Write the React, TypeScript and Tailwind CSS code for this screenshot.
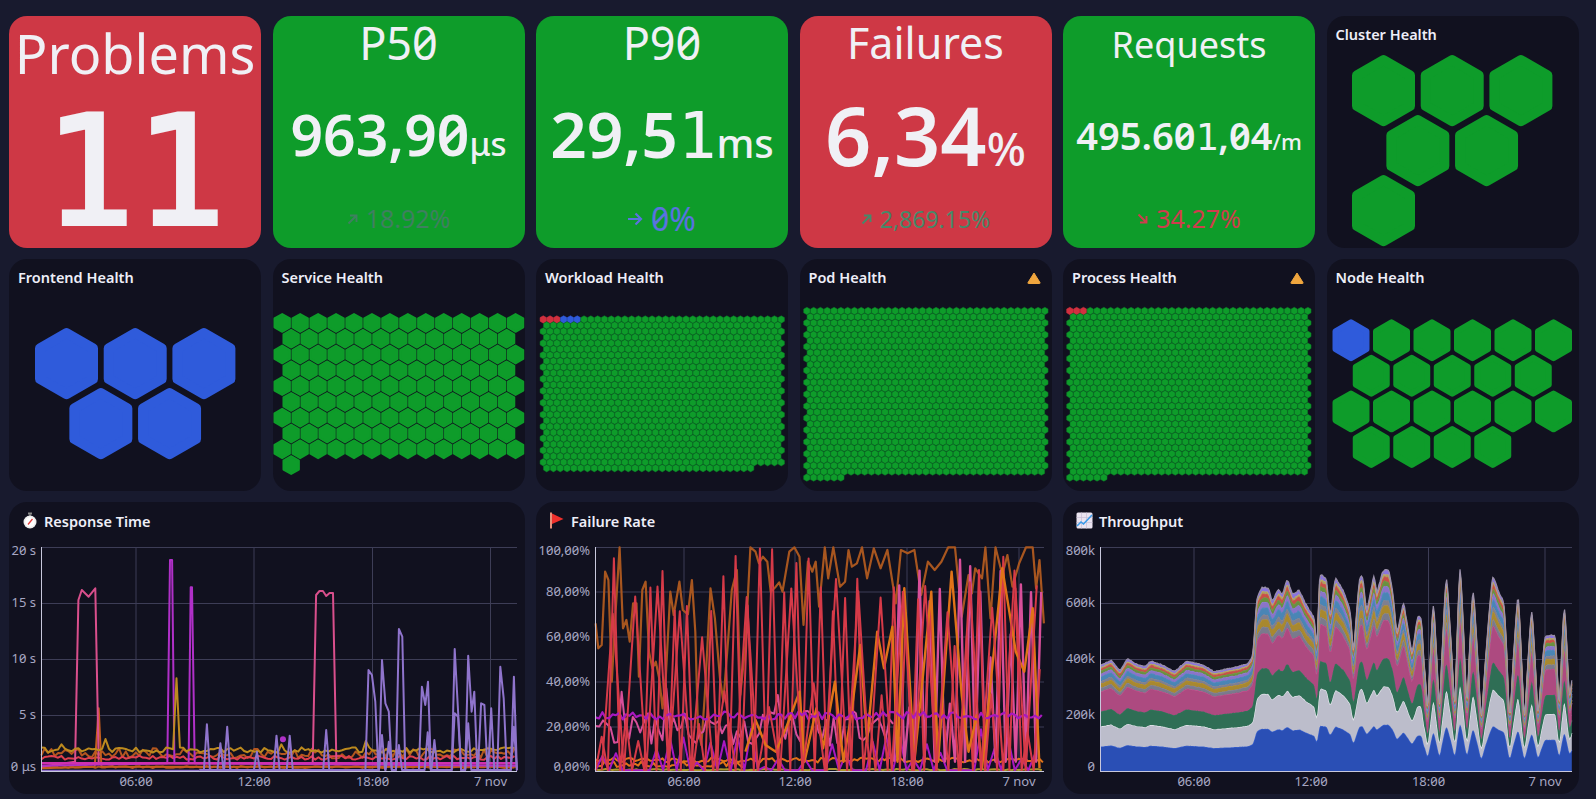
import type { ReactNode } from 'react';

const GREEN = '#0e9c2a';
const BLUE = '#2f5bdb';
const LABEL = '#a6a6c2';

function rng(seed: number) {
    let a = seed;
    return () => {
        a = (a + 0x6d2b79f5) | 0;
        let t = Math.imul(a ^ (a >>> 15), 1 | a);
        t = (t + Math.imul(t ^ (t >>> 7), 61 | t)) ^ t;
        return ((t ^ (t >>> 14)) >>> 0) / 4294967296;
    };
}

type Pt = [number, number];

function noiseLine(from: number, to: number, step: number, base: number, amp: number, seed: number): Pt[] {
    const r = rng(seed);
    const out: Pt[] = [];
    for (let x = from; x <= to; x += step) out.push([x, base + (r() - 0.5) * amp]);
    return out;
}

function spikeLine(from: number, to: number, step: number, floor: number, low: number, high: number, seed: number): Pt[] {
    const r = rng(seed);
    const out: Pt[] = [];
    for (let x = from; x <= to; x += step) {
        out.push([x, floor]);
        const w = r();
        const top = w < 0.55 ? low + r() * 200 : low + r() * (high - low);
        out.push([x + step / 2, top]);
    }
    return out;
}

function peaks(base: number, list: Pt[], from: number, to: number): Pt[] {
    const out: Pt[] = [[from, base]];
    list.forEach(([x, y], i) => {
        const prev = list[i - 1];
        if (!prev || x - prev[0] > 12) out.push([x - 9, base]);
        out.push([x, y]);
        const next = list[i + 1];
        if (!next || next[0] - x > 12) out.push([x + 9, base]);
    });
    out.push([to, base]);
    return out;
}

function Num({ text }: { text: string }) {
    return (
        <>
            {text.split(/(1)/).map((part, i) =>
                part === '1'
                    ? <span key={i} className="font-['DejaVu_Sans_Mono',monospace] font-normal">1</span>
                    : <span key={i}>{part}</span>,
            )}
        </>
    );
}

function Arrow({ dir, color }: { dir: 'up' | 'down' | 'right'; color: string }) {
    if (dir === 'right') {
        return (
            <svg width="15" height="14" viewBox="0 0 15 14" fill="none" stroke={color} strokeWidth="2.2">
                <path d="M0 7h13M7.5 1.5l5.5 5.5-5.5 5.5" />
            </svg>
        );
    }
    const d = dir === 'up' ? 'M1.5 10.5l8-8M3 2.5h6.5V9' : 'M1.5 1.5l8 8M3 9.5h6.5V3';
    return (
        <svg width="11" height="12" viewBox="0 0 11 12" fill="none" stroke={color} strokeWidth="1.9">
            <path d={d} />
        </svg>
    );
}

type StatProps = {
    title: string;
    titleClass: string;
    value: string;
    valueClass: string;
    unit: string;
    unitClass: string;
    bg: string;
    delta: string;
    deltaClass: string;
    deltaColor: string;
    dir: 'up' | 'down' | 'right';
};

function StatCard(p: StatProps) {
    return (
        <div className={`flex flex-col items-center rounded-[18px] text-[#f0f0f5] ${p.bg}`}>
            <div className={`whitespace-nowrap font-normal slashed-zero ${p.titleClass}`}>{p.title}</div>
            <div className="flex flex-1 items-center justify-center whitespace-nowrap">
                <span className={`font-semibold slashed-zero ${p.valueClass}`}>
                    <Num text={p.value} />
                    <span className={`font-medium ${p.unitClass}`}>{p.unit}</span>
                </span>
            </div>
            <div className="mb-[14px] flex h-[30px] items-center gap-[8px]">
                <Arrow dir={p.dir} color={p.deltaColor} />
                <span className={`font-normal slashed-zero ${p.deltaClass}`}>{p.delta}</span>
            </div>
        </div>
    );
}

type CombProps = {
    rows: number[];
    x0: number;
    y0: number;
    w: number;
    dx: number;
    dy: number;
    s: number;
    stroke?: string;
    colorAt?: (n: number) => string;
    fill?: string;
};

function Honeycomb({ rows, x0, y0, w, dx, dy, s, stroke, colorAt, fill = GREEN }: CombProps) {
    const inner = w - s;
    const halfW = inner / 2;
    const r = inner / Math.sqrt(3);
    const hexes: ReactNode[] = [];
    let n = 0;
    rows.forEach((count, j) => {
        for (let i = 0; i < count; i++) {
            const cx = x0 + w / 2 + i * dx + (j % 2 ? dx / 2 : 0);
            const cy = y0 + r + s / 2 + j * dy;
            const points = `${cx},${cy - r} ${cx + halfW},${cy - r / 2} ${cx + halfW},${cy + r / 2} ${cx},${cy + r} ${cx - halfW},${cy + r / 2} ${cx - halfW},${cy - r / 2}`;
            const c = colorAt ? colorAt(n) : fill;
            hexes.push(
                <polygon
                    key={n}
                    points={points}
                    fill={c}
                    stroke={stroke && c === GREEN ? stroke : c}
                    strokeWidth={s}
                    strokeLinejoin="round"
                />,
            );
            n++;
        }
    });
    return <svg className="w-full flex-1">{hexes}</svg>;
}

function Warning() {
    return (
        <svg width="14" height="12" viewBox="0 0 14 12" className="mt-[5px]">
            <path d="M7 1L13 10.6Q13.4 11.5 12.4 11.5H1.6Q0.6 11.5 1 10.6Z" fill="#f0a63e" stroke="#f0a63e" strokeLinejoin="round" />
        </svg>
    );
}

function HealthPanel({ title, warn, children }: { title: string; warn?: boolean; children: ReactNode }) {
    return (
        <div className="flex flex-col rounded-[18px] bg-[#11111f]">
            <div className="flex h-[30px] shrink-0 justify-between pl-[9px] pr-[11px] pt-[8px] text-[14.5px] font-semibold leading-[20px] text-[#eeeef8]">
                <span>{title}</span>
                {warn && <Warning />}
            </div>
            {children}
        </div>
    );
}

function tinyRows(count: number, last: number) {
    const rows: number[] = [];
    for (let j = 0; j < count; j++) rows.push(j % 2 ? 35 : 36);
    rows[count - 1] = last;
    return rows;
}

function Stopwatch() {
    return (
        <svg width="16" height="17" viewBox="0 0 16 17">
            <rect x="6" y="0.5" width="4" height="2" fill="#8a8a8a" />
            <rect x="7.2" y="2" width="1.6" height="2" fill="#777" />
            <circle cx="8" cy="10" r="6.5" fill="#eeeeee" />
            <circle cx="8" cy="10" r="4.8" fill="#ffffff" />
            <path d="M6 12.5L10.5 7" stroke="#e33b3b" strokeWidth="1.3" />
        </svg>
    );
}

function Flag() {
    return (
        <svg width="16" height="17" viewBox="0 0 16 17">
            <rect x="1" y="0.5" width="2" height="16" fill="#e8907a" />
            <path d="M3 1.5L14.5 7L3 12Z" fill="#f0302c" />
        </svg>
    );
}

function ChartEmoji() {
    return (
        <svg width="17" height="17" viewBox="0 0 17 17">
            <rect x="0.5" y="0.5" width="16" height="16" rx="1.5" fill="#ebe4f0" />
            <path d="M0.5 5.5h16M0.5 10.5h16M5.5 0.5v16M10.5 0.5v16" stroke="#c9bfd6" strokeWidth="0.7" />
            <path d="M1 14l4-4 2.5 2L16 3" fill="none" stroke="#3b9be8" strokeWidth="1.6" />
        </svg>
    );
}

type ChartSpec = {
    left: number;
    right: number;
    yLines: { y: number; label: string; labelY: number }[];
    xTicks: { x: number; label: string }[];
    children: ReactNode;
};

function Chart({ left, right, yLines, xTicks, children }: ChartSpec) {
    return (
        <svg className="w-full flex-1 overflow-visible slashed-zero">
            {yLines.slice(1).map(l => <line key={l.y} x1={left} x2={right} y1={l.y} y2={l.y} stroke="#3d3d56" />)}
            <line x1={left} x2={right} y1={0.5} y2={0.5} stroke="#3d3d56" />
            {xTicks.map(t => <line key={t.label} x1={t.x} x2={t.x} y1={0} y2={224.5} stroke="#3d3d56" />)}
            {children}
            <line x1={left + 0.5} x2={left + 0.5} y1={0} y2={225} stroke="#c8c8dc" />
            <line x1={left} x2={right} y1={224.5} y2={224.5} stroke="#c8c8dc" />
            {yLines.map(l => (
                <text key={l.label} x={left - 5} y={l.labelY} textAnchor="end" dominantBaseline="middle" fontSize="13" fill={LABEL}>
                    {l.label}
                </text>
            ))}
            {xTicks.map(t => (
                <text key={t.label} x={t.x} y={236} textAnchor="middle" dominantBaseline="middle" fontSize="13" fill={LABEL}>
                    {t.label}
                </text>
            ))}
        </svg>
    );
}

function Line({ pts, color, tx, width = 2 }: { pts: Pt[]; color: string; tx: (p: Pt) => Pt; width?: number }) {
    const d = pts.map(p => tx(p).map(v => v.toFixed(1)).join(',')).join(' ');
    return <polyline points={d} fill="none" stroke={color} strokeWidth={width} strokeLinejoin="round" />;
}

function ResponseChart() {
    const tx = (p: Pt): Pt => [p[0] / 2.958 - 9, p[1] / 3 - 52];
    const pink: Pt[] = [[122, 815], [222, 800], [232, 315], [242, 285], [262, 305], [282, 280], [292, 805], [925, 805], [935, 300], [945, 288], [955, 288], [965, 303], [975, 294], [985, 294], [995, 805], [1530, 805]];
    const magenta: Pt[] = [[122, 812], [495, 805], [503, 195], [509, 195], [516, 805], [558, 805], [564, 277], [568, 277], [576, 805], [1530, 812]];
    const gold = noiseLine(122, 1530, 10, 765, 16, 7).map(([x, y]): Pt => {
        if (x === 522) return [x, 550];
        if (x === 312) return [x, 732];
        if (x === 182) return [x, 748];
        if (x === 832) return [x, 748];
        if (x === 1082) return [x, 738];
        return [x, y];
    });
    const purple = peaks(825, [
        [612, 688], [652, 745], [672, 695], [760, 770], [818, 722], [857, 722], [965, 705],
        [1090, 525], [1100, 540], [1110, 620], [1130, 495], [1140, 625], [1150, 650], [1180, 402], [1190, 425],
        [1248, 575], [1258, 630], [1266, 560], [1345, 462], [1355, 650], [1385, 482], [1395, 650], [1403, 590],
        [1423, 625], [1433, 630], [1453, 640], [1480, 515], [1490, 610], [1520, 545],
    ], 590, 1530);
    const purple2 = peaks(825, [[1130, 720], [1150, 740], [1180, 750], [1265, 712], [1285, 735], [1345, 655], [1355, 665], [1385, 685], [1520, 695]], 590, 1530);
    return (
        <Chart
            left={32}
            right={508}
            yLines={[
                { y: 0, label: '20 s', labelY: 5 },
                { y: 56.5, label: '15 s', labelY: 57 },
                { y: 112.5, label: '10 s', labelY: 113 },
                { y: 168.5, label: '5 s', labelY: 169 },
                { y: 224.5, label: '0 μs', labelY: 221 },
            ]}
            xTicks={[{ x: 127, label: '06:00' }, { x: 245, label: '12:00' }, { x: 363.5, label: '18:00' }, { x: 481.5, label: '7 nov' }]}
        >
            <Line pts={noiseLine(122, 1530, 10, 775, 30, 3)} color="#b4561f" tx={tx} />
            <Line pts={noiseLine(122, 1530, 10, 788, 12, 4)} color="#e0404e" tx={tx} />
            <Line pts={noiseLine(122, 1530, 10, 816, 6, 5)} color="#b4561f" tx={tx} />
            <Line pts={[[122, 820], [280, 815], [292, 640], [300, 815], [1530, 815]]} color="#c45d1e" tx={tx} />
            <Line pts={pink} color="#d94f8c" tx={tx} />
            <Line pts={magenta} color="#b030c8" tx={tx} />
            <Line pts={[[122, 805], [1530, 805]]} color="#d030b0" tx={tx} width={2.4} />
            <Line pts={gold} color="#bd8a1e" tx={tx} />
            <Line pts={[[122, 827], [590, 827]]} color="#8f74cc" tx={tx} />
            <Line pts={purple2} color="#8f74cc" tx={tx} />
            <Line pts={purple} color="#8f74cc" tx={tx} />
            <circle cx={837 / 2.958 - 9} cy={733 / 3 - 52} r="3" fill="#b030c8" />
        </Chart>
    );
}

function FailureChart() {
    const tx = (p: Pt): Pt => [Math.min(p[0], 1523) / 2.958 - 7, Math.min(Math.max(p[1], 157), 826) / 3 - 52];
    const brown: Pt[] = [[197, 385], [205, 460], [215, 450], [225, 230], [235, 255], [245, 560], [255, 370], [268, 157], [278, 400], [288, 375], [298, 440], [308, 325], [318, 325], [325, 545], [335, 285], [345, 260], [355, 470], [365, 520], [375, 500], [385, 550], [395, 640], [405, 540], [418, 290], [428, 360], [445, 260], [455, 345], [470, 358], [482, 255], [492, 410], [500, 700], [510, 750], [520, 600], [537, 280], [550, 370], [565, 550], [575, 620], [590, 420], [600, 285], [615, 225], [625, 600], [640, 450], [655, 157], [670, 170], [680, 205], [692, 185], [705, 200], [715, 290], [730, 275], [740, 262], [750, 290], [770, 170], [785, 157], [800, 185], [812, 390], [825, 200], [838, 230], [848, 200], [858, 335], [875, 157], [885, 250], [900, 157], [920, 275], [935, 260], [945, 165], [955, 215], [970, 205], [985, 157], [1000, 250], [1020, 160], [1040, 220], [1060, 165], [1085, 325], [1100, 165], [1120, 175], [1140, 165], [1160, 300], [1180, 200], [1200, 225], [1220, 200], [1240, 157], [1260, 157], [1280, 365], [1300, 240], [1310, 295], [1320, 220], [1340, 250], [1350, 157], [1365, 370], [1380, 157], [1400, 240], [1415, 180], [1430, 275], [1450, 205], [1470, 157], [1490, 157], [1500, 280], [1510, 195], [1523, 385]];
    const orange: Pt[] = [[640, 770], [670, 675], [700, 750], [730, 770], [760, 700], [800, 590], [815, 800], [850, 640], [870, 760], [905, 560], [930, 800], [950, 680], [980, 450], [1000, 740], [1030, 410], [1050, 520], [1075, 395], [1090, 800], [1110, 280], [1140, 800], [1190, 290], [1210, 800], [1250, 230], [1280, 600], [1300, 770], [1325, 660], [1340, 820], [1400, 220], [1440, 470], [1465, 530], [1490, 340], [1510, 820]];
    const pinkLow = noiseLine(197, 1080, 11, 700, 110, 21).map(([x, y], i): Pt => {
        if (i === 7) return [x, 590];
        if (i === 19) return [x, 580];
        if (i === 49) return [x, 600];
        return [x, y];
    });
    return (
        <Chart
            left={59}
            right={508}
            yLines={[
                { y: 0, label: '100,00%', labelY: 5 },
                { y: 45, label: '80,00%', labelY: 46 },
                { y: 90, label: '60,00%', labelY: 91 },
                { y: 135, label: '40,00%', labelY: 136 },
                { y: 180, label: '20,00%', labelY: 181 },
                { y: 224.5, label: '0,00%', labelY: 221 },
            ]}
            xTicks={[{ x: 148, label: '06:00' }, { x: 259, label: '12:00' }, { x: 371, label: '18:00' }, { x: 483, label: '7 nov' }]}
        >
            <Line pts={brown} color="#a8561f" tx={tx} width={2.2} />
            <Line pts={noiseLine(197, 640, 9, 808, 18, 31)} color="#e07318" tx={tx} />
            <Line pts={noiseLine(197, 1523, 9, 795, 15, 32)} color="#e07318" tx={tx} />
            <Line pts={noiseLine(197, 1523, 10, 824, 4, 33)} color="#a9962a" tx={tx} />
            <Line pts={spikeLine(197, 1500, 40, 828, 700, 800, 34)} color="#a818c0" tx={tx} />
            <Line pts={pinkLow} color="#d84f9a" tx={tx} />
            <Line pts={spikeLine(1080, 1500, 30, 800, 170, 700, 35)} color="#d84f9a" tx={tx} width={2.4} />
            <Line pts={spikeLine(197, 1500, 36, 828, 157, 760, 36)} color="#d63a48" tx={tx} />
            <Line pts={orange} color="#e07318" tx={tx} width={2.4} />
            <Line pts={noiseLine(197, 1523, 10, 662, 24, 38)} color="#a818c0" tx={tx} width={2.2} />
            <Line pts={spikeLine(215, 1500, 66, 828, 157, 700, 37)} color="#d63a48" tx={tx} />
        </Chart>
    );
}

const ENVELOPE: Pt[] = [[120, 510], [150, 495], [175, 528], [197, 490], [225, 508], [250, 515], [265, 498], [300, 510], [335, 530], [370, 498], [420, 510], [450, 530], [495, 520], [520, 515], [550, 505], [565, 480], [575, 310], [590, 277], [610, 278], [620, 320], [640, 280], [650, 300], [665, 250], [680, 300], [700, 285], [720, 330], [745, 370], [752, 490], [758, 237], [780, 250], [790, 370], [805, 245], [830, 290], [850, 350], [858, 480], [875, 250], [885, 240], [897, 350], [920, 230], [925, 300], [945, 225], [962, 225], [975, 300], [985, 420], [1005, 318], [1030, 480], [1045, 365], [1058, 365], [1070, 640], [1075, 745], [1092, 348], [1110, 730], [1130, 238], [1155, 730], [1170, 188], [1190, 730], [1208, 288], [1232, 760], [1265, 256], [1285, 330], [1300, 370], [1315, 765], [1340, 312], [1358, 765], [1380, 373], [1398, 740], [1418, 488], [1450, 485], [1460, 740], [1475, 345], [1490, 700], [1497, 625]];

const LAYERS: { top: number; fill: string; line: string }[] = [
    { top: 0.23, fill: '#2a4fb5', line: '#3a62d0' },
    { top: 0.42, fill: '#bcbdcb', line: '#e8ebf0' },
    { top: 0.56, fill: '#2f6e55', line: '#2f7a5a' },
    { top: 0.75, fill: '#ad4a80', line: '#c85090' },
    { top: 0.785, fill: '#7a7a8c', line: '#8a8a98' },
    { top: 0.825, fill: '#a8882f', line: '#b89430' },
    { top: 0.85, fill: '#7f7f90', line: '#8a8a98' },
    { top: 0.89, fill: '#4a85b5', line: '#5090c0' },
    { top: 0.92, fill: '#8a74c8', line: '#9480d0' },
    { top: 0.945, fill: '#6a9040', line: '#74a048' },
    { top: 0.965, fill: '#c85048', line: '#d05850' },
    { top: 0.98, fill: '#b0a060', line: '#c0b070' },
    { top: 1, fill: '#8a74e0', line: '#9a90a8' },
];

function envelopeAt(x: number) {
    for (let i = 1; i < ENVELOPE.length; i++) {
        const [x1, y1] = ENVELOPE[i - 1];
        const [x2, y2] = ENVELOPE[i];
        if (x <= x2) {
            const y = y1 + ((x - x1) / (x2 - x1)) * (y2 - y1);
            // the late peaks are round on top and sharp in the dips
            return x > 1065 ? 828 - 640 * Math.pow((828 - y) / 640, 0.72) : y;
        }
    }
    return ENVELOPE[ENVELOPE.length - 1][1];
}

function ThroughputChart() {
    const sx = (x: number) => x / 2.925 - 3;
    const sy = (y: number) => y / 3 - 52;
    const xs: number[] = [];
    for (let x = 120; x <= 1497; x += 3) xs.push(x);
    const env = xs.map(envelopeAt).map((y, i, a) => (y * 2 + (a[i - 1] ?? y) + (a[i + 1] ?? y)) / 4);
    const r = rng(11);
    const tops = LAYERS.map(l => {
        return xs.map((_, i) => {
            const wobble = 1 + (r() - 0.5) * 0.008;
            return 828 - (828 - env[i]) * l.top * wobble;
        });
    });
    const fmt = (x: number, y: number) => `${sx(x).toFixed(1)},${sy(y).toFixed(1)}`;
    return (
        <Chart
            left={37}
            right={509}
            yLines={[
                { y: 0, label: '800k', labelY: 5 },
                { y: 56.5, label: '600k', labelY: 57 },
                { y: 112.5, label: '400k', labelY: 113 },
                { y: 168.5, label: '200k', labelY: 169 },
                { y: 224.5, label: '0', labelY: 221 },
            ]}
            xTicks={[{ x: 131, label: '06:00' }, { x: 248, label: '12:00' }, { x: 365.5, label: '18:00' }, { x: 482, label: '7 nov' }]}
        >
            {LAYERS.map((l, k) => {
                const upper = xs.map((x, i) => fmt(x, tops[k][i]));
                const lower = xs.map((x, i) => fmt(x, k ? tops[k - 1][i] : 828)).reverse();
                return (
                    <g key={k}>
                        <polygon points={[...upper, ...lower].join(' ')} fill={l.fill} />
                        <polyline points={upper.join(' ')} fill="none" stroke={l.line} strokeWidth="1.2" />
                    </g>
                );
            })}
        </Chart>
    );
}

function ChartPanel({ icon, title, children }: { icon: ReactNode; title: string; children: ReactNode }) {
    return (
        <div className="col-span-2 flex flex-col rounded-[18px] bg-[#11111f]">
            <div className="flex h-[45px] shrink-0 items-center gap-[6px] pb-[8px] pl-[13px] text-[14.5px] font-semibold leading-[20px] text-[#eeeef8]">
                {icon}
                <span>{title}</span>
            </div>
            {children}
        </div>
    );
}

export default function App() {
    return (
        <div className="h-[799px] w-[1596px] overflow-hidden bg-[#181a2e] pl-[9px] pt-[16px] font-['Noto_Sans',sans-serif]">
            <div className="grid w-[1569.5px] grid-cols-6 grid-rows-[232px_232px_292px] gap-x-[11.5px] gap-y-[11px]">
                <div className="flex flex-col items-center rounded-[18px] bg-[#ce3845] text-[#f0f0f5]">
                    <div className="pt-[2px] text-[54px] font-normal leading-[70px]">Problems</div>
                    <div className="flex flex-1 items-center pt-[8px] font-['DejaVu_Sans_Mono',monospace] text-[151px] leading-[130px] [-webkit-text-stroke:4px_#f0f0f5]">11</div>
                </div>
                <StatCard
                    title="P50"
                    titleClass="pt-[4px] text-[45px] leading-[46px]"
                    value="963,90"
                    valueClass="text-[57px]"
                    unit="μs"
                    unitClass="text-[33px]"
                    bg="bg-[#0e9c2a]"
                    delta="18.92%"
                    deltaClass="text-[25px] text-[#3f8060]"
                    deltaColor="#3f8060"
                    dir="up"
                />
                <StatCard
                    title="P90"
                    titleClass="pt-[4px] text-[45px] leading-[46px]"
                    value="29,51"
                    valueClass="text-[64px]"
                    unit="ms"
                    unitClass="text-[40px]"
                    bg="bg-[#0e9c2a]"
                    delta="0%"
                    deltaClass="text-[32px] text-[#5a72e0]"
                    deltaColor="#5a72e0"
                    dir="right"
                />
                <StatCard
                    title="Failures"
                    titleClass="pt-[4px] text-[43px] leading-[46px]"
                    value="6,34"
                    valueClass="text-[81px]"
                    unit="%"
                    unitClass="text-[46px]"
                    bg="bg-[#ce3845]"
                    delta="2,869.15%"
                    deltaClass="text-[23px] text-[#46896a]"
                    deltaColor="#46896a"
                    dir="up"
                />
                <StatCard
                    title="Requests"
                    titleClass="pt-[6px] text-[36px] leading-[46px]"
                    value="495.601,04"
                    valueClass="text-[38px]"
                    unit="/m"
                    unitClass="text-[22px]"
                    bg="bg-[#0e9c2a]"
                    delta="34.27%"
                    deltaClass="text-[25px] text-[#cf3d4d]"
                    deltaColor="#cf3d4d"
                    dir="down"
                />
                <HealthPanel title="Cluster Health">
                    <Honeycomb rows={[3, 2, 1]} x0={25} y0={9} w={63} dx={68.7} dy={60} s={10} />
                </HealthPanel>

                <HealthPanel title="Frontend Health">
                    <Honeycomb rows={[3, 2]} x0={26} y0={39} w={63} dx={68.7} dy={60} s={10} fill={BLUE} />
                </HealthPanel>
                <HealthPanel title="Service Health">
                    <Honeycomb rows={[14, 13, 14, 13, 14, 13, 14, 13, 14, 1]} x0={0.5} y0={24} w={17.4} dx={17.95} dy={15.8} s={2} />
                </HealthPanel>
                <HealthPanel title="Workload Health">
                    <Honeycomb
                        rows={tinyRows(26, 31)}
                        x0={3.8}
                        y0={26.5}
                        w={6.9}
                        dx={6.8}
                        dy={5.95}
                        s={0.5}
                        stroke="#0a7a26"
                        colorAt={n => (n < 3 ? '#d0303f' : n < 6 ? BLUE : GREEN)}
                    />
                </HealthPanel>
                <HealthPanel title="Pod Health" warn>
                    <Honeycomb rows={tinyRows(29, 6)} x0={3.4} y0={18} w={6.9} dx={6.8} dy={5.95} s={0.5} stroke="#0a7a26" />
                </HealthPanel>
                <HealthPanel title="Process Health" warn>
                    <Honeycomb
                        rows={tinyRows(29, 6)}
                        x0={3.4}
                        y0={18}
                        w={6.9}
                        dx={6.8}
                        dy={5.95}
                        s={0.5}
                        stroke="#0a7a26"
                        colorAt={n => (n < 3 ? '#d0303f' : GREEN)}
                    />
                </HealthPanel>
                <HealthPanel title="Node Health">
                    <Honeycomb
                        rows={[6, 5, 6, 4]}
                        x0={5.5}
                        y0={30.3}
                        w={37}
                        dx={40.5}
                        dy={35.6}
                        s={6}
                        colorAt={n => (n === 0 ? BLUE : GREEN)}
                    />
                </HealthPanel>

                <ChartPanel icon={<Stopwatch />} title="Response Time">
                    <ResponseChart />
                </ChartPanel>
                <ChartPanel icon={<Flag />} title="Failure Rate">
                    <FailureChart />
                </ChartPanel>
                <ChartPanel icon={<ChartEmoji />} title="Throughput">
                    <ThroughputChart />
                </ChartPanel>
            </div>
        </div>
    );
}
